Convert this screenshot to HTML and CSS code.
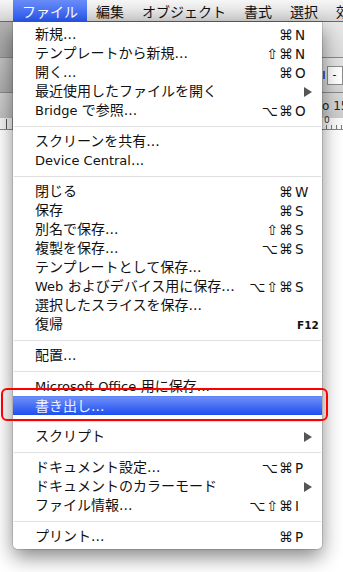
FILE: index.html
```html
<!DOCTYPE html>
<html lang="ja">
<head>
<meta charset="utf-8">
<title>ファイル メニュー</title>
<link rel="stylesheet" href="styles.css">
</head>
<body>
<div class="screen">
  <div class="menubar">
    <span class="mb-item active">ファイル</span>
    <span class="mb-item">編集</span>
    <span class="mb-item">オブジェクト</span>
    <span class="mb-item">書式</span>
    <span class="mb-item">選択</span>
    <span class="mb-item">効</span>
  </div>
  <div class="app">
    <div class="tb tb1">
      <div class="tb-left"></div>
      <div class="tb-right"></div>
    </div>
    <div class="tb tb2">
      <div class="tb-left"></div>
      <div class="tb-right"><span class="blue-dot"></span><span class="field">-</span></div>
    </div>
    <div class="tb tb3">
      <div class="tb-left"></div>
      <div class="tb-right"><span class="tb-num">o 15</span></div>
    </div>
    <div class="ruler">
      <div class="ruler-left"><span class="rmark"></span></div>
      <div class="ruler-right"><span class="rzero">0</span></div>
    </div>
    <div class="canvas"></div>
  </div>

  <div class="menu">
    <div class="row"><span class="label">新規...</span><span class="sc"><span class="mods">⌘</span><span class="key">N</span></span></div>
    <div class="row"><span class="label">テンプレートから新規...</span><span class="sc"><span class="mods">⇧⌘</span><span class="key">N</span></span></div>
    <div class="row"><span class="label">開く...</span><span class="sc"><span class="mods">⌘</span><span class="key">O</span></span></div>
    <div class="row"><span class="label">最近使用したファイルを開く</span><span class="sc"><span class="mods"></span><span class="key"><span class="arrow"></span></span></span></div>
    <div class="row"><span class="label"><span class="en">Bridge</span> で参照...</span><span class="sc"><span class="mods">⌥⌘</span><span class="key">O</span></span></div>
    <div class="sep"></div>
    <div class="row"><span class="label">スクリーンを共有...</span></div>
    <div class="row"><span class="label"><span class="en">Device Central</span>...</span></div>
    <div class="sep"></div>
    <div class="row"><span class="label">閉じる</span><span class="sc"><span class="mods">⌘</span><span class="key">W</span></span></div>
    <div class="row"><span class="label">保存</span><span class="sc"><span class="mods">⌘</span><span class="key">S</span></span></div>
    <div class="row"><span class="label">別名で保存...</span><span class="sc"><span class="mods">⇧⌘</span><span class="key">S</span></span></div>
    <div class="row"><span class="label">複製を保存...</span><span class="sc"><span class="mods">⌥⌘</span><span class="key">S</span></span></div>
    <div class="row"><span class="label">テンプレートとして保存...</span></div>
    <div class="row"><span class="label"><span class="en">Web</span> およびデバイス用に保存...</span><span class="sc"><span class="mods">⌥⇧⌘</span><span class="key">S</span></span></div>
    <div class="row"><span class="label">選択したスライスを保存...</span></div>
    <div class="row"><span class="label">復帰</span><span class="sc"><span class="mods"></span><span class="key fkey">F12</span></span></div>
    <div class="sep"></div>
    <div class="row"><span class="label">配置...</span></div>
    <div class="sep"></div>
    <div class="row"><span class="label"><span class="en">Microsoft Office</span> 用に保存...</span></div>
    <div class="row selected"><span class="label">書き出し...</span></div>
    <div class="sep"></div>
    <div class="row"><span class="label">スクリプト</span><span class="sc"><span class="mods"></span><span class="key"><span class="arrow"></span></span></span></div>
    <div class="sep"></div>
    <div class="row"><span class="label">ドキュメント設定...</span><span class="sc"><span class="mods">⌥⌘</span><span class="key">P</span></span></div>
    <div class="row"><span class="label">ドキュメントのカラーモード</span><span class="sc"><span class="mods"></span><span class="key"><span class="arrow"></span></span></span></div>
    <div class="row"><span class="label">ファイル情報...</span><span class="sc"><span class="mods">⌥⇧⌘</span><span class="key">I</span></span></div>
    <div class="sep"></div>
    <div class="row"><span class="label">プリント...</span><span class="sc"><span class="mods">⌘</span><span class="key">P</span></span></div>
  </div>

  <div class="callout"></div>
</div>
</body>
</html>
```
FILE: styles.css
```css
* { box-sizing: border-box; }
html, body { margin: 0; padding: 0; background: #fff; }
body {
  font-family: "DejaVu Sans", "Noto Sans CJK JP", sans-serif;
  font-size: 14px;
  color: #000;
}
.screen {
  position: relative;
  width: 343px;
  height: 572px;
  overflow: hidden;
  background: #fff;
}

/* menu bar */
.menubar {
  height: 22px;
  display: flex;
  align-items: stretch;
  padding-left: 13px;
  background: linear-gradient(#f6f6f6, #d4d4d4);
  border-bottom: 1px solid #6a6a6a;
  white-space: nowrap;
}
.mb-item {
  display: flex;
  align-items: center;
  padding: 0 9px;
  font-family: "Noto Sans CJK JP", sans-serif;
  font-size: 14px;
  color: #111;
}
.mb-item.active {
  color: #fff;
  background: linear-gradient(#6a8cf7, #2a59f0);
}

/* application behind the menu */
.tb { display: flex; justify-content: space-between; }
.tb-left { width: 13px; }
.tb-right { width: 21px; display: flex; align-items: center; }
.tb1 { height: 36px; border-bottom: 1px solid #8a8a8a; }
.tb1 .tb-left { background: linear-gradient(#b4b4b4, #a2a2a2); }
.tb1 .tb-right { background: linear-gradient(#e8e8e8, #dadada); }
.tb2 { height: 35px; border-bottom: 1px solid #8a8a8a; }
.tb2 .tb-left { background: linear-gradient(#c2c2c2, #acacac); }
.tb2 .tb-right { background: linear-gradient(#e4e4e4, #d4d4d4); padding-left: 1px; }
.blue-dot { width: 3px; height: 8px; background: #3f63c8; }
.field {
  margin-left: 2px;
  width: 18px;
  height: 19px;
  background: #fff;
  border: 1px solid #8c8c8c;
  font-size: 11px;
  padding-left: 4px;
  line-height: 16px;
}
.tb3 { height: 25px; }
.tb3 .tb-left { background: linear-gradient(#cfcfcf, #c0c0c0); }
.tb3 .tb-right { background: linear-gradient(#d8d8d8, #cdcdcd); }
.tb-num {
  font-family: "DejaVu Sans", sans-serif;
  font-size: 12px;
  color: #222;
  white-space: nowrap;
}
.ruler {
  height: 12px;
  display: flex;
  justify-content: space-between;
  border-bottom: 1px solid #888;
}
.ruler-left { width: 13px; position: relative; border-right: 1px solid #999; background: #f4f4f4; }
.rmark { position: absolute; left: 6px; top: 1px; width: 1px; height: 10px; background: #555; }
.ruler-right {
  width: 21px;
  background: repeating-linear-gradient(90deg, #fafafa 0 4px, #777 4px 5px);
  background-size: 100% 4px;
  background-position: bottom;
  background-repeat: no-repeat;
  background-color: #fafafa;
  position: relative;
}
.rzero { position: absolute; left: 2px; top: -3px; font-size: 9px; color: #333; }
.canvas { height: 400px; background: #fff; }

/* dropdown menu */
.menu {
  position: absolute;
  left: 13px;
  top: 22px;
  width: 309px;
  padding: 3px 0;
  background: rgba(255, 255, 255, 0.98);
  border-radius: 0 0 5px 5px;
  box-shadow: 0 8px 20px rgba(0, 0, 0, 0.48), 0 0 0 1px rgba(0, 0, 0, 0.12);
}
.row {
  height: 19px;
  display: flex;
  align-items: center;
  padding: 0 6px 0 22px;
  white-space: nowrap;
  color: #111;
}
.label { flex: 1; line-height: 19px; }
.en { font-size: 13px; }
.sc { display: flex; align-items: center; font-family: "DejaVu Sans", sans-serif; font-size: 13.5px; }
.mods { text-align: right; letter-spacing: 1px; font-size: 14px; }
.key { width: 22px; padding-left: 1px; display: flex; align-items: center; }
.fkey { font-weight: bold; font-size: 10.5px; padding-left: 3px; }
.arrow {
  margin-left: 9px;
  width: 0;
  height: 0;
  border-top: 5px solid transparent;
  border-bottom: 5px solid transparent;
  border-left: 8px solid #555;
}
.sep {
  height: 1px;
  margin: 6px 1px 5px;
  background: #e0e0e0;
}
.row.selected {
  color: #eef2ff;
  background: linear-gradient(#6d8ff8, #4a72f5 45%, #1e4ff0);
  border-top: 1px solid #5f83f2;
}

/* red highlight around the selected item */
.callout {
  position: absolute;
  left: 1px;
  top: 388px;
  width: 327px;
  height: 33px;
  border: 2.5px solid #ff0000;
  border-radius: 6px;
}
```
